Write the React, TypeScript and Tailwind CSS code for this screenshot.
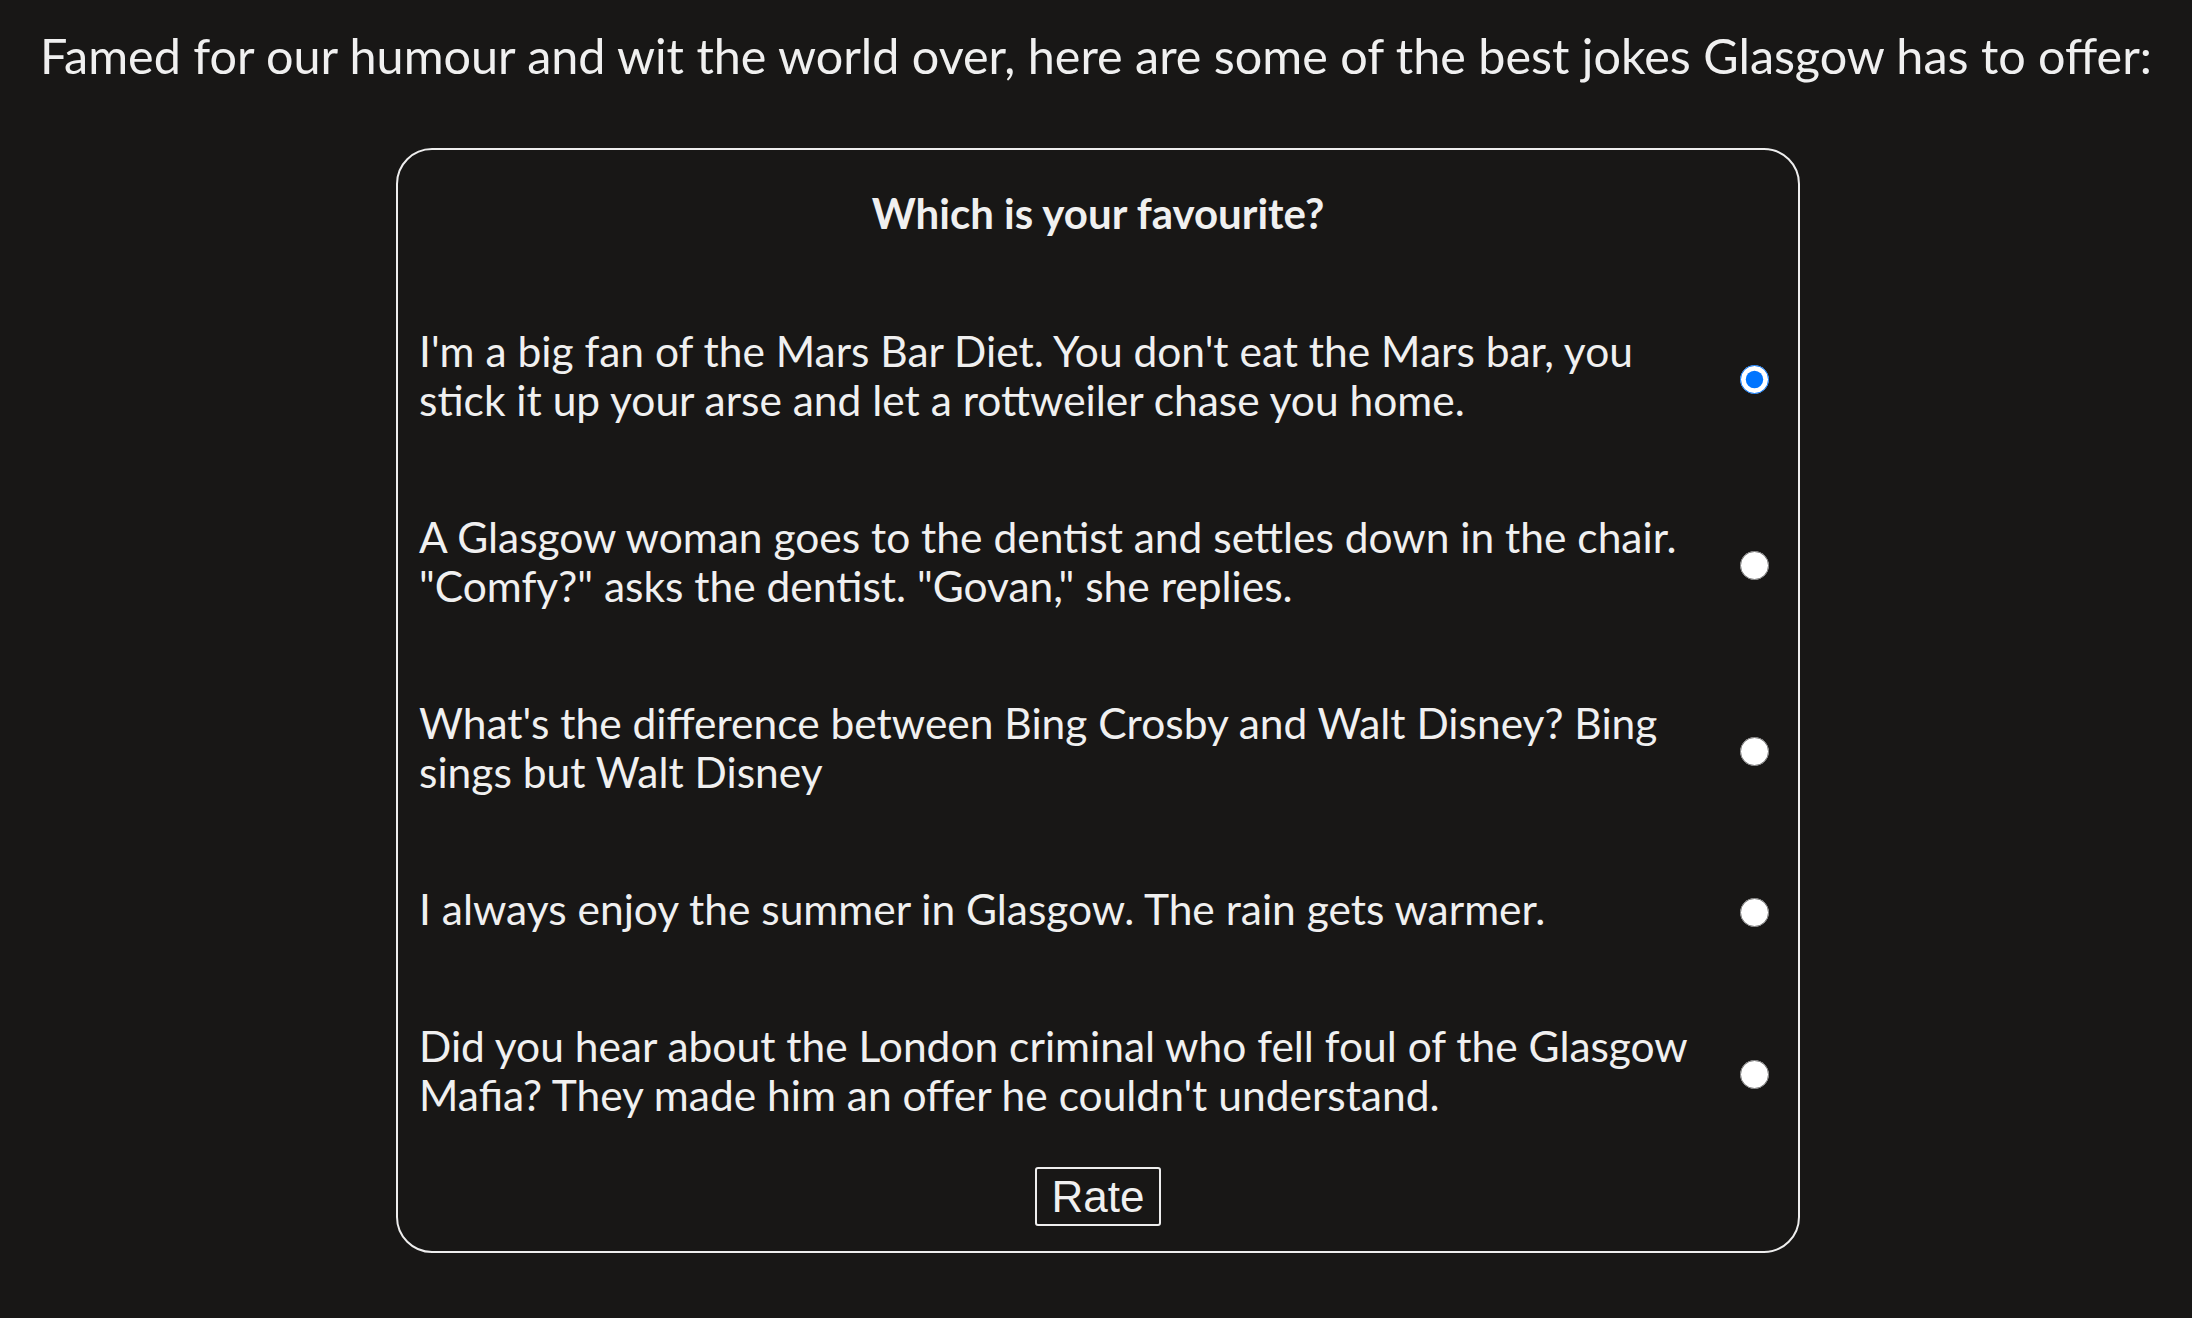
import { useState } from 'react'

const jokes = [
  "I'm a big fan of the Mars Bar Diet. You don't eat the Mars bar, you stick it up your arse and let a rottweiler chase you home.",
  'A Glasgow woman goes to the dentist and settles down in the chair. "Comfy?" asks the dentist. "Govan," she replies.',
  "What's the difference between Bing Crosby and Walt Disney? Bing sings but Walt Disney",
  'I always enjoy the summer in Glasgow. The rain gets warmer.',
  "Did you hear about the London criminal who fell foul of the Glasgow Mafia? They made him an offer he couldn't understand.",
]

export default function App() {
  const [choice, setChoice] = useState(0)

  return (
    <div className="min-h-screen bg-[#181716] text-[#f0f0f0] font-['Lato',sans-serif]">
      <p className="pt-[26px] text-center text-[48.5px] leading-[1.2]">
        Famed for our humour and wit the world over, here are some of the best jokes Glasgow has to offer:
      </p>

      <form
        className="mx-auto mt-[64px] w-[1404px] translate-x-[2px] rounded-[36px] border-2 border-[#eeeeee] pb-[25px]"
        onSubmit={(e) => e.preventDefault()}
      >
        <h2 className="pt-[38px] text-center text-[42px] font-bold leading-[50px]">Which is your favourite?</h2>

        <div className="mt-[48px] flex flex-col">
          {jokes.map((joke, i) => (
            <label key={i} className="flex items-center py-[40px] pl-[21px] pr-[29px]">
              <span className="w-[1275px] pb-[8px] text-[42.5px] leading-[49px]">{joke}</span>
              <input
                type="radio"
                name="joke"
                checked={choice === i}
                onChange={() => setChoice(i)}
                className="ml-auto m-0 h-[29px] w-[29px]"
              />
            </label>
          ))}
        </div>

        <div className="flex justify-center">
          <button
            type="submit"
            className="h-[59px] w-[126px] rounded-[3px] border-2 border-[#eeeeee] font-['Liberation_Sans',Arial,sans-serif] text-[44px] leading-none text-[#f0f0f0]"
          >
            Rate
          </button>
        </div>
      </form>
    </div>
  )
}
